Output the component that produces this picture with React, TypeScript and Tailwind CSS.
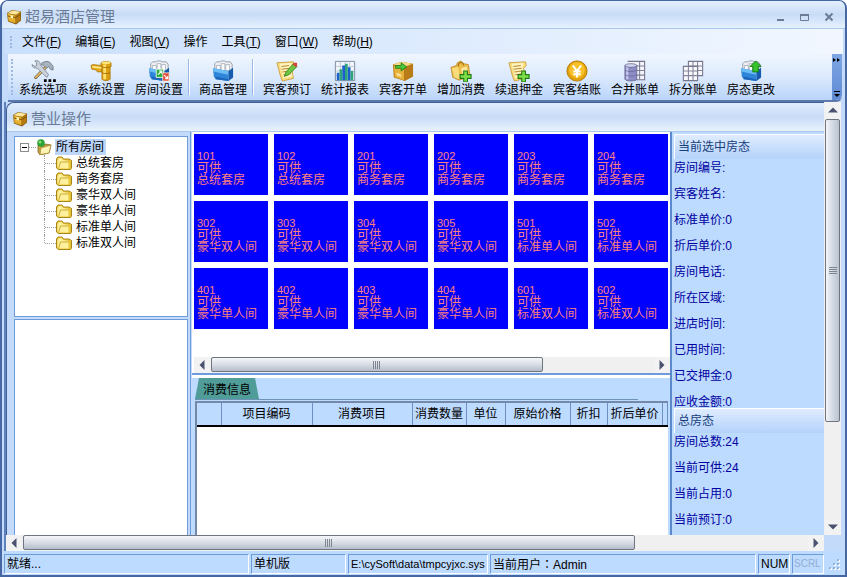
import type { ReactNode } from "react";

const FONT = "font-['Liberation_Sans','Noto_Sans_CJK_SC',sans-serif]";

/* ---------- icons ---------- */

function BoxIcon({ className = "" }: { className?: string }) {
  return (
    <svg viewBox="0 0 16 16" className={className} aria-hidden="true">
      <path d="M1 4l5-3 9 1.5v9L10 15.500 2 12.5z" fill="#8a5c0c" />
      <path d="M1.500 4.200L6.200 1.600l8.300 1.200-4.300 3z" fill="#fbe699" />
      <path d="M1.500 4.600l8 1.600v8L2.600 12z" fill="#e6b030" />
      <path d="M9.800 6.200l4.600-3v8l-4.600 3z" fill="#b67c12" />
      <path d="M2 7l7.500 1.600L14.400 5.600" fill="none" stroke="#7b5208" strokeWidth="1" />
      <path d="M4.500 6l2.500.5v3l-2.500-.5z" fill="#fff2b0" />
    </svg>
  );
}

function ToolsIcon() {
  return (
    <svg viewBox="0 0 24 24" className="size-[22px] overflow-visible" aria-hidden="true">
      <path d="M4 19L15 8" stroke="#5f4a2b" strokeWidth="3.200" strokeLinecap="round" />
      <path d="M4 19L15 8" stroke="#e9bd62" strokeWidth="1.800" strokeLinecap="round" />
      <path d="M11 3c4-2 7-2 9 0l3 4v4l-3-1-2-3-2 2-3-3-3-1z" fill="#a9b3c0" stroke="#606b79" strokeWidth=".8" />
      <path d="M0 5l3 2 2-1V3L3 1c4-1 6 1 6 4l9 11-2 3L6 9C3 9 0 8 0 5z" fill="#ccd3dc" stroke="#6a7482" strokeWidth=".8" />
      <path d="M13 21h3v3h-3zM18 21h3v3h-3zM23 21h3v3h-3z" fill="#000" />
    </svg>
  );
}

function TapIcon() {
  return (
    <svg viewBox="0 0 24 24" className="size-[22px]" aria-hidden="true">
      <path d="M1 6l2-1 10 1v7H8l-1-2-5-1z" fill="#e3a917" stroke="#a87308" strokeWidth=".8" />
      <path d="M2 6.500l11 1v2L3 8.500z" fill="#ffe98c" />
      <path d="M12 3c2-2 9-2 11 0v4l-1 1v13c-2 2-7 2-9 0V8l-1-1z" fill="#dc9f12" stroke="#a87308" strokeWidth=".8" />
      <ellipse cx="17.500" cy="3" rx="5" ry="1.500" fill="#ffe67c" />
      <path d="M14.500 5h3v16h-3z" fill="#ffe06a" />
      <path d="M12.500 7.500c3 1 7 1 10 0M13 14c3 1 6 1 9 0" fill="none" stroke="#a06c04" strokeWidth=".9" />
    </svg>
  );
}

function FileBin({ children }: { children?: ReactNode }) {
  return (
    <svg viewBox="0 0 24 24" className="size-[22px]" aria-hidden="true">
      <path d="M3 12V4l2-2h4l1-1h4l1 1h5l2 3v7z" fill="#eceef2" stroke="#8a93a0" strokeWidth=".9" />
      <path d="M5 11V6h4v5M10 11V4h4v7M15 11V5h4v6" fill="#fff" stroke="#9aa3b0" strokeWidth=".8" />
      <path d="M1 9l17 3v11L4 21l-2-3z" fill="#2f86d8" />
      <path d="M1 9l17 3v4L1.500 12.500z" fill="#6cbcf6" />
      <path d="M18 12l5-3.500V19l-5 4z" fill="#155cae" />
      <path d="M4 18l14 3v2L4 21z" fill="#1b66bd" />
      {children}
    </svg>
  );
}

function NoteIcon({ children }: { children?: ReactNode }) {
  return (
    <svg viewBox="0 0 24 24" className="size-[22px]" aria-hidden="true">
      <path d="M1 3l18-1 1 4-3 3 2 11-12 3-2-5z" fill="#f8dc7e" stroke="#c79a31" strokeWidth=".9" />
      <path d="M4 4l13-1-1 5 2 10-10 2z" fill="#fff4bd" />
      <path d="M6 7l8-1M6 10l9-1M7 13l8-1M8 16l8-1" stroke="#b58a35" strokeWidth="1.100" />
      {children}
    </svg>
  );
}

function Plus() {
  return <path d="M15 12h4v4h4v4h-4v4h-4v-4h-4v-4h4z" fill="#7ee04a" stroke="#217a14" strokeWidth="1.200" />;
}

function ChartIcon() {
  return (
    <svg viewBox="0 0 24 24" className="size-[22px]" aria-hidden="true">
      <path d="M1.500 1.500h21v21h-21z" fill="#f2f5fa" stroke="#77879c" />
      <path d="M2 7h20M2 12h20M2 17h20M7 2v20M12 2v20M17 2v20" stroke="#b4c0ce" strokeWidth=".8" />
      <path d="M3 14h3v8H3zM9 6h3v16H9zM15 8h3v14h-3z" fill="#1d5fd0" />
      <path d="M6 10h3v12H6zM12 4h3v18h-3zM18 12h3v10h-3z" fill="#2ea37c" />
    </svg>
  );
}

function CrateIcon() {
  return (
    <svg viewBox="0 0 24 24" className="size-[22px]" aria-hidden="true">
      <path d="M1 5l9-3 13 2v14l-9 5-12-4z" fill="#b87a12" />
      <path d="M1.500 5L10 2l12.500 2L13 8z" fill="#f5d984" />
      <path d="M2 6l11 3v13L3 18.500z" fill="#e6b23c" />
      <path d="M13.500 9L22.500 5v12.500L13.500 22z" fill="#b87c18" />
      <path d="M5 14l5 1.500v3L5 17z" fill="#f9df93" />
      <path d="M4 6h6V3l6 4.500-6 4.500V9H4z" fill="#4cc63a" stroke="#1b7a16" strokeWidth=".9" />
    </svg>
  );
}

function BagIcon() {
  return (
    <svg viewBox="0 0 24 24" className="size-[22px]" aria-hidden="true">
      <path d="M1 8l6-2 1-3 4-2 3 3 5 1 2 13-12 4-7-3z" fill="#ebbd48" stroke="#b8811a" strokeWidth=".8" />
      <path d="M2 9l7-1 2 13-6-2z" fill="#fbdc7d" />
      <path d="M9 7c0-5 5-6 6-1" fill="none" stroke="#a87114" strokeWidth="1.200" />
      <path d="M12 9l6-2 2 6-7 2z" fill="#fbe79c" />
      <Plus />
    </svg>
  );
}

function YenIcon() {
  return (
    <svg viewBox="0 0 24 24" className="size-[22px]" aria-hidden="true">
      <circle cx="12" cy="12" r="11" fill="#e4a20a" stroke="#b57a05" />
      <circle cx="12" cy="11" r="8.500" fill="#f8c22c" />
      <path d="M7.500 6l4.500 6 4.500-6M12 12v7M8 12.500h8M8 15.500h8" fill="none" stroke="#fff" strokeWidth="2.200" />
    </svg>
  );
}

function MergeIcon() {
  return (
    <svg viewBox="0 0 24 24" className="size-[22px]" aria-hidden="true">
      <path d="M4 1.500h18.500v20H12" fill="#f4f4fa" stroke="#75758e" strokeWidth="1.200" />
      <path d="M12 6.500h10M12 11.500h10M12 16.500h10M17 2v19" stroke="#80809a" strokeWidth="1.200" />
      <path d="M1 6v15c1 2.500 12 2.500 13 0V6z" fill="#8d8dc4" stroke="#5c5c8c" strokeWidth=".8" />
      <path d="M3.500 7v14" stroke="#c6c6ea" strokeWidth="2.500" />
      <ellipse cx="7.500" cy="6" rx="6.500" ry="2" fill="#d3d3f0" stroke="#62628f" strokeWidth=".8" />
      <path d="M1 11c2 2 11 2 13 0M1 16c2 2 11 2 13 0" fill="none" stroke="#66669a" strokeWidth=".8" />
    </svg>
  );
}

function SplitIcon() {
  return (
    <svg viewBox="0 0 24 24" className="size-[22px]" aria-hidden="true">
      <path d="M7 1.500h15.500V17H7z" fill="#f8f8fc" stroke="#77778e" strokeWidth="1.200" />
      <path d="M7 6.500h15M7 11.500h15M12 2v15M17 2v15" stroke="#85859b" strokeWidth="1.200" />
      <path d="M1.500 7H17v15.500H1.500z" fill="#f8f8fc" stroke="#77778e" strokeWidth="1.200" />
      <path d="M2 12h15M2 17h15M7 7v15M12 7v15" stroke="#85859b" strokeWidth="1.200" />
    </svg>
  );
}

function FolderIcon() {
  return (
    <svg viewBox="0 0 16 16" className="size-4 shrink-0" aria-hidden="true">
      <path d="M.5 4l1.500-2h4l1.500 2H13l2.500 1.500v7.500l-1 1.500h-12L.5 13z" fill="#e9c53c" stroke="#a98616" />
      <path d="M1.500 5.500L3 3h2.500L7 5l5.500 1v7.500h-10l-1-1z" fill="#fdf09c" />
      <path d="M2.500 13.500l2-6.500H13" fill="none" stroke="#cfab2c" />
    </svg>
  );
}

function RootIcon() {
  return (
    <svg viewBox="0 0 16 16" className="size-4 shrink-0" aria-hidden="true">
      <path d="M2 6l6 1 1-2 6 1-2 8-9 2-2-3z" fill="#c4a045" stroke="#80661c" strokeWidth=".8" />
      <path d="M5 9l10-3-2 8-9 1.500z" fill="#fdf3b4" stroke="#a98a35" strokeWidth=".7" />
      <circle cx="5" cy="4" r="3.800" fill="#2aa336" />
      <circle cx="4" cy="3" r="1.500" fill="#7fdc74" />
    </svg>
  );
}

/* ---------- scroll bars ---------- */

function Arrow({ d, label }: { d: string; label: string }) {
  return (
    <button aria-label={label} className="flex size-4 shrink-0 items-center justify-center bg-[#f2f2f2]">
      <svg viewBox="0 0 10 10" className="size-[10px]" aria-hidden="true">
        <path d={d} fill="#4a5270" />
      </svg>
    </button>
  );
}

function HScroll({ thumb }: { thumb: string }) {
  return (
    <div className="flex h-4 shrink-0 gap-px bg-[#f0f0f0]">
      <Arrow label="向左滚动" d="M7.500 0v10l-5-5z" />
      <div className="min-w-0 flex-1">
        <div
          className={`flex h-[15px] items-center justify-center gap-px rounded-[2px] border border-[#6f7682] bg-linear-to-b from-[#f4f6f9] via-[#d9dee6] to-[#b4bdca] ${thumb}`}
        >
          <i className="h-2 w-px bg-[#7d8492]" />
          <i className="h-2 w-px bg-[#7d8492]" />
          <i className="h-2 w-px bg-[#7d8492]" />
          <i className="h-2 w-px bg-[#7d8492]" />
        </div>
      </div>
      <Arrow label="向右滚动" d="M2.500 0v10l5-5z" />
    </div>
  );
}

function VScroll() {
  return (
    <div className="flex w-[17px] shrink-0 flex-col items-center gap-px bg-[#f0f0f0]">
      <Arrow label="向上滚动" d="M0 7.500h10l-5-5z" />
      <div className="min-h-0 w-[15px] flex-1">
        <div className="flex h-[76%] flex-col items-center justify-center gap-px rounded-[2px] border border-[#6f7682] bg-linear-to-r from-[#f4f6f9] via-[#d3dae4] to-[#bac3d0]">
          <i className="h-px w-2 bg-[#7d8492]" />
          <i className="h-px w-2 bg-[#7d8492]" />
          <i className="h-px w-2 bg-[#7d8492]" />
          <i className="h-px w-2 bg-[#7d8492]" />
        </div>
      </div>
      <Arrow label="向下滚动" d="M0 2.500h10l-5 5z" />
    </div>
  );
}

/* ---------- data ---------- */

const MENUS: [string, string][] = [
  ["文件", "F"],
  ["编辑", "E"],
  ["视图", "V"],
  ["操作", ""],
  ["工具", "T"],
  ["窗口", "W"],
  ["帮助", "H"],
];

const TOOLS: { label: string; icon: ReactNode; sep?: boolean }[] = [
  { label: "系统选项", icon: <ToolsIcon /> },
  { label: "系统设置", icon: <TapIcon /> },
  {
    label: "房间设置",
    icon: (
      <FileBin>
        <path d="M9 10h8v9H9z" fill="#2cae3c" stroke="#e9f7e9" />
        <path d="M11 16l4-4M12 12h3v3" fill="none" stroke="#fff" strokeWidth="1.200" />
        <path d="M16 14h7v9h-7z" fill="#e5533a" stroke="#fff" strokeWidth=".7" />
        <path d="M17.500 16.500l4 4M21.500 17.500v3h-3" fill="none" stroke="#fff" strokeWidth="1.200" />
      </FileBin>
    ),
  },
  { label: "商品管理", icon: <FileBin />, sep: true },
  {
    label: "宾客预订",
    icon: (
      <NoteIcon>
        <path d="M9 18l2-5 8-9 4 3-9 9z" fill="#6cc640" stroke="#2f7d1c" strokeWidth=".9" />
        <path d="M18 5l2-2h3v3l-1 2z" fill="#d3453a" />
      </NoteIcon>
    ),
    sep: true,
  },
  { label: "统计报表", icon: <ChartIcon /> },
  { label: "宾客开单", icon: <CrateIcon /> },
  { label: "增加消费", icon: <BagIcon /> },
  {
    label: "续退押金",
    icon: (
      <NoteIcon>
        <Plus />
      </NoteIcon>
    ),
  },
  { label: "宾客结账", icon: <YenIcon /> },
  { label: "合并账单", icon: <MergeIcon /> },
  { label: "拆分账单", icon: <SplitIcon /> },
  {
    label: "房态更改",
    icon: (
      <FileBin>
        <path d="M17 1l6 6h-3v6h-6V7h-3z" fill="#36c32c" stroke="#127a10" />
      </FileBin>
    ),
  },
];

const ROOM_TYPES = ["总统套房", "商务套房", "豪华双人间", "豪华单人间", "标准单人间", "标准双人间"];

const ROOMS: [string, string][] = [
  ["101", "总统套房"],
  ["102", "总统套房"],
  ["201", "商务套房"],
  ["202", "商务套房"],
  ["203", "商务套房"],
  ["204", "商务套房"],
  ["302", "豪华双人间"],
  ["303", "豪华双人间"],
  ["304", "豪华双人间"],
  ["305", "豪华双人间"],
  ["501", "标准单人间"],
  ["502", "标准单人间"],
  ["401", "豪华单人间"],
  ["402", "豪华单人间"],
  ["403", "豪华单人间"],
  ["404", "豪华单人间"],
  ["601", "标准双人间"],
  ["602", "标准双人间"],
];

const COLUMNS: [string, string][] = [
  ["", "w-6"],
  ["项目编码", "w-[91px]"],
  ["消费项目", "w-[100px]"],
  ["消费数量", "w-[54px]"],
  ["单位", "w-[39px]"],
  ["原始价格", "w-[65px]"],
  ["折扣", "w-[37px]"],
  ["折后单价", "w-[55px]"],
  ["", ""],
];

const SELECTED: [string, string][] = [
  ["房间编号", ""],
  ["宾客姓名", ""],
  ["标准单价", "0"],
  ["折后单价", "0"],
  ["房间电话", ""],
  ["所在区域", ""],
  ["进店时间", ""],
  ["已用时间", ""],
  ["已交押金", "0"],
  ["应收金额", "0"],
];

const TOTALS: [string, string][] = [
  ["房间总数", "24"],
  ["当前可供", "24"],
  ["当前占用", "0"],
  ["当前预订", "0"],
];

/* ---------- parts ---------- */

function TitleBar() {
  return (
    <header className="flex h-7 shrink-0 items-center gap-[3px] border-b border-[#a9c8ee] bg-linear-to-b from-[#e4effc] via-[#c8dcf7] to-[#e6f1fe] pt-1 pr-2 pl-1">
      <BoxIcon className="size-4" />
      <h1 className="flex-1 text-[15px] leading-5 text-[#6b7b95]">超易酒店管理</h1>
      <div className="flex gap-2 text-[#6c7c98]">
        <button aria-label="最小化" className="flex size-4 items-center justify-center">
          <svg viewBox="0 0 10 10" className="size-[10px]">
            <path d="M1 7h7v2H1z" fill="currentColor" />
          </svg>
        </button>
        <button aria-label="最大化" className="flex size-4 items-center justify-center">
          <svg viewBox="0 0 10 10" className="size-[10px]">
            <path d="M.5 2.500h8v6h-8z" fill="none" stroke="currentColor" />
            <path d="M0 2h9v2H0z" fill="currentColor" />
          </svg>
        </button>
        <button aria-label="关闭" className="flex size-4 items-center justify-center">
          <svg viewBox="0 0 10 10" className="size-[10px]">
            <path d="M1.500 1.500l7 7M8.500 1.500l-7 7" stroke="currentColor" strokeWidth="2" />
          </svg>
        </button>
      </div>
    </header>
  );
}

function MenuBar() {
  return (
    <nav className="flex h-[25px] shrink-0 items-center bg-linear-to-r from-[#c9dffc] to-[#f2f7ff] pl-[6px]">
      <span className="mr-[3px] h-3 border-l-2 border-dotted border-[#9db9e2]" />
      {MENUS.map(([name, key]) => (
        <button key={name} className="px-[7px] leading-4 whitespace-nowrap">
          {name}
          {key && (
            <>
              (<u>{key}</u>)
            </>
          )}
        </button>
      ))}
    </nav>
  );
}

function ToolBar() {
  return (
    <div className="mr-px ml-1 flex h-12 shrink-0 rounded-br-md border-b-2 border-[#5d78ab] bg-linear-to-b from-[#f0f6ff] via-[#dceafd] to-[#b9d4fa]">
      <div className="flex min-w-0 flex-1 items-center overflow-hidden pl-[3px]">
        <span className="mr-px h-9 shrink-0 border-l-2 border-dotted border-[#9db9e2]" />
        {TOOLS.map((t) => (
          <div key={t.label} className="flex shrink-0 items-center">
            {t.sep && <span className="mr-1 h-9 w-[2px] border-r border-l border-r-white border-l-[#9ab9e6]" />}
            <button className="flex w-[58px] flex-col items-center pt-1">
              {t.icon}
              <span className="leading-4 whitespace-nowrap">{t.label}</span>
            </button>
          </div>
        ))}
      </div>
      <button
        aria-label="更多工具"
        className="flex w-[10px] shrink-0 flex-col items-center justify-between rounded-br-md bg-linear-to-b from-[#7ea6e4] to-[#5f8bd4] pt-1 pb-[3px]"
      >
        <svg viewBox="0 0 8 4" className="h-1 w-2">
          <path d="M0 0l3 2-3 2zM4 0l3 2-3 2z" />
        </svg>
        <svg viewBox="0 0 6 6" className="size-[6px]">
          <path d="M0 0h6v1H0zM0 3h6L3 6z" />
        </svg>
      </button>
    </div>
  );
}

function RoomTree() {
  return (
    <div className="h-[181px] shrink-0 border border-[#6d9bdc] bg-white pt-[2px] pl-[5px] leading-4">
      <div className="flex h-4 items-center">
        <button
          aria-label="折叠"
          className="flex size-[9px] shrink-0 items-center justify-center border border-[#8c8c8c] bg-white"
        >
          <span className="h-px w-[5px] bg-black" />
        </button>
        <span className="w-[7px] border-t border-dotted border-[#a0a0a0]" />
        <RootIcon />
        <span className="ml-[3px] bg-[#bdd7fa] pr-[2px] pl-px">所有房间</span>
      </div>
      <ul className="ml-6">
        {ROOM_TYPES.map((name, i) => (
          <li key={name} className="flex h-4">
            <span
              className={`border-l border-dotted border-[#a0a0a0] ${i === ROOM_TYPES.length - 1 ? "h-2" : "h-4"}`}
            />
            <span className="mt-2 w-[11px] border-t border-dotted border-[#a0a0a0]" />
            <FolderIcon />
            <span className="ml-1">{name}</span>
          </li>
        ))}
      </ul>
    </div>
  );
}

function RoomBoard() {
  return (
    <div className="flex h-[243px] shrink-0 flex-col border-b-2 border-[#6d9bdc] bg-white">
      <div className="flex-1 overflow-hidden pt-[2px] pl-[2px]">
        <div className="grid grid-cols-[repeat(6,74px)] gap-[6px]">
          {ROOMS.map(([no, type]) => (
            <button
              key={no}
              className="h-[61px] bg-[#0000ff] pt-[7px] pl-[3px] text-left leading-3 whitespace-pre text-[#ff8080]"
            >
              <span className="block h-3 text-[11px]">{no}</span>
              <span className="block h-6">{`可供\n${type}`}</span>
            </button>
          ))}
        </div>
      </div>
      <div className="pl-[2px]">
        <HScroll thumb="w-3/4" />
      </div>
    </div>
  );
}

function Consumption() {
  return (
    <div className="mt-[3px] flex min-h-0 flex-1 flex-col overflow-hidden bg-[#bddaff] pl-[3px]">
      <div className="mr-8 h-[22px] shrink-0 border-b border-[#6d92b8]">
        <button className="h-[21px] w-16 bg-[#4f9c98] text-center leading-6 [clip-path:polygon(4px_0,60px_0,100%_100%,0_100%)]">
          消费信息
        </button>
      </div>
      <div className="mt-px mr-[2px] min-h-0 flex-1 border-t-2 border-l-2 border-[#7488a8] bg-white">
        <table className="w-full table-fixed border-collapse">
          <thead>
            <tr className="h-[23px] border-b-2 border-black bg-[#bddaff]">
              {COLUMNS.map(([name, width], i) => (
                <th
                  key={i}
                  className={`border-r border-[#6d8fc4] border-b-black p-0 font-normal whitespace-nowrap ${width}`}
                >
                  {name}
                </th>
              ))}
            </tr>
          </thead>
          <tbody />
        </table>
      </div>
    </div>
  );
}

function InfoSection({ title, rows, size }: { title: string; rows: [string, string][]; size: string }) {
  return (
    <section className={`overflow-hidden ${size}`}>
      <h3 className="h-[25px] border-t border-l border-white bg-linear-to-b from-[#dfecfe] to-[#b4d2fb] pl-[3px] leading-6 text-[#173f7c]">
        {title}
      </h3>
      <dl>
        {rows.map(([name, value]) => (
          <div key={name} className="flex h-[26px] leading-[18px] text-[#0000a0]">
            <dt>{name}:</dt>
            <dd>{value}</dd>
          </div>
        ))}
      </dl>
    </section>
  );
}

function StatusCell({ children, className }: { children: ReactNode; className: string }) {
  return (
    <div
      className={`overflow-hidden border border-t-[#6d9bdc] border-r-white border-b-white border-l-[#6d9bdc] leading-[18px] whitespace-nowrap ${className}`}
    >
      {children}
    </div>
  );
}

function StatusBar() {
  return (
    <footer className="flex h-6 shrink-0 gap-[2px] bg-[#bddaff] pt-[3px] pb-px">
      <StatusCell className="min-w-0 flex-1 pl-[2px]">就绪...</StatusCell>
      <StatusCell className="w-[95px] pl-[2px]">单机版</StatusCell>
      <StatusCell className="w-[140px] pl-[2px] text-[11px]">E:\cySoft\data\tmpcyjxc.sys</StatusCell>
      <StatusCell className="w-[266px] pl-[2px]">
        当前用户<span className="font-['Noto_Sans_CJK_TC',sans-serif]">：</span>Admin
      </StatusCell>
      <StatusCell className="w-8 pl-[2px]">NUM</StatusCell>
      <StatusCell className="w-8 pl-px text-[10px] text-[#93aed3]">SCRL</StatusCell>
      <svg viewBox="0 0 17 18" className="w-[17px]" aria-hidden="true">
        <path
          d="M12 5h2v2h-2zM8 9h2v2H8zM12 9h2v2h-2zM4 13h2v2H4zM8 13h2v2H8zM12 13h2v2h-2z"
          fill="#fff"
        />
        <path d="M11 4h2v2h-2zM7 8h2v2H7zM11 8h2v2h-2zM3 12h2v2H3zM7 12h2v2H7zM11 12h2v2h-2z" fill="#8fb2e0" />
      </svg>
    </footer>
  );
}

export default function App() {
  return (
    <div
      className={`flex h-screen min-h-[480px] flex-col overflow-hidden rounded-t-lg border-2 border-t border-[#4568a5] bg-[#c3dafa] text-xs text-black ${FONT}`}
    >
      <TitleBar />
      <div className="flex min-h-0 flex-1 flex-col px-[2px]">
        <MenuBar />
        <ToolBar />
        <div className="flex min-h-0 flex-1 flex-col border-l-2 border-[#5f82bd] pr-[2px]">
          <div className="flex min-h-0 flex-1">
            <main className="flex min-w-0 flex-1 flex-col rounded-tl-lg border-t border-l border-[#3f5f98] bg-[#c3dafa]">
              <div className="flex h-[29px] shrink-0 items-center gap-[3px] rounded-tl-lg border-b border-[#a9c8ee] bg-linear-to-b from-[#e0ecfc] via-[#c8dcf7] to-[#e8f2fe] pt-1 pl-[5px]">
                <BoxIcon className="size-4" />
                <h2 className="text-[15px] leading-5 text-[#6b7b95]">营业操作</h2>
              </div>
              <div className="flex min-h-0 flex-1 pl-[7px]">
                <div className="flex w-[174px] shrink-0 flex-col gap-[2px] pt-1">
                  <RoomTree />
                  <div className="min-h-0 flex-1 border border-b-0 border-[#6d9bdc] bg-white" />
                </div>
                <div className="mx-px w-[2px] shrink-0 border-r border-[#6d9bdc]" />
                <div className="flex min-w-0 flex-1 flex-col bg-white">
                  <RoomBoard />
                  <Consumption />
                </div>
                <aside className="flex w-[154px] shrink-0 flex-col border-l-2 border-[#5c88cc] bg-[#bddaff] pt-[2px] pl-[2px]">
                  <InfoSection title="当前选中房态" rows={SELECTED} size="h-[274px] shrink-0" />
                  <InfoSection title="总房态" rows={TOTALS} size="min-h-0 flex-1" />
                </aside>
              </div>
            </main>
            <VScroll />
          </div>
          <div className="mr-[17px]">
            <HScroll thumb="w-[78%]" />
          </div>
        </div>
        <StatusBar />
      </div>
    </div>
  );
}
